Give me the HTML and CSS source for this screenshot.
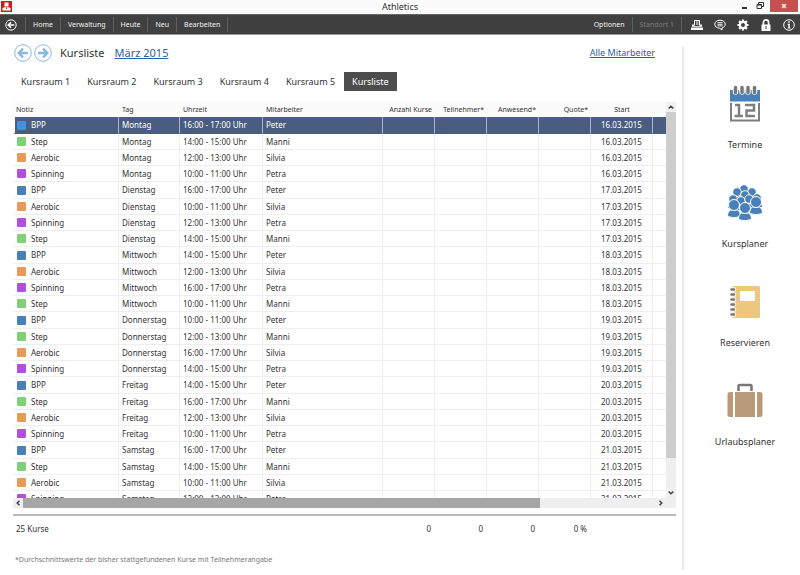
FILE: index.html
```
<!DOCTYPE html>
<html lang="de">
<head>
<meta charset="utf-8">
<title>Athletics</title>
<link rel="stylesheet" href="styles.css">
</head>
<body>
<header class="titlebar">
  <svg class="app-icon" viewBox="0 0 11 11" aria-hidden="true"><path fill="#c8201a" d="M0 0h11v11H0z"/><path fill="#fff" d="M3.500 1.500h4v4h-4zM1.500 9.500V7l2-.8h4l2 .8v2.500z"/><path fill="#c8201a" d="M5 6.500h1V8H5z"/></svg>
  <h1 class="app-name">Athletics</h1>
  <div class="window-buttons">
    <button class="win" aria-label="Minimieren"><svg width="8" height="8" viewBox="0 0 8 8"><path fill="#333" d="M2 5h5v2H2z"/></svg></button>
    <button class="win" aria-label="Verkleinern"><svg width="8" height="8" viewBox="0 0 8 8"><path fill="none" stroke="#333" d="M1 2.500h4.500v4H1zM2.500 2.500v-2h5v4h-2M1 3h4.500"/></svg></button>
    <button class="win close" aria-label="Schließen"><svg width="6" height="6" viewBox="0 0 6 6"><path stroke="#fff" stroke-width="1.300" d="M1 1l4 4M5 1L1 5"/></svg></button>
  </div>
</header>
<nav class="toolbar">
  <button class="tool back" aria-label="Zurück"><svg width="12" height="12" viewBox="0 0 12 12"><circle cx="6" cy="6" r="5.200" fill="none" stroke="#fff"/><path fill="none" stroke="#fff" stroke-width="1.600" d="M9.300 6H3.500M6 3.200L3.200 6 6 8.800"/></svg></button>
  <button class="tool">Home</button>
  <button class="tool">Verwaltung</button>
  <button class="tool">Heute</button>
  <button class="tool">Neu</button>
  <button class="tool">Bearbeiten</button>
  <span class="spring"></span>
  <button class="tool options">Optionen</button>
  <button class="tool" disabled>Standort 1</button>
  <div class="tool-icons">
    <button aria-label="Drucken"><svg width="12" height="12" viewBox="0 0 12 12"><path fill="#fff" d="M0 8.500h12V11H0zM1 5.500h2V7h6V5.500h2v2.300H1z"/><path fill="none" stroke="#fff" d="M3.500 6.500v-5h5v5M5 3h2.500M5 5h2.500"/></svg></button>
    <button aria-label="Nachrichten"><svg width="12" height="12" viewBox="0 0 12 12"><path fill="none" stroke="#fff" d="M6 1.200c3 0 5.200 1.700 5.200 4 0 2-1.500 3.300-3.300 3.800L8 11 5.500 9.200C2.800 9 .8 7.500.8 5.200c0-2.300 2.200-4 5.200-4z"/><path stroke="#fff" d="M3.500 3.700h5M3.500 5.300h5M3.500 6.900h5" stroke-width=".9"/></svg></button>
    <button aria-label="Einstellungen"><svg width="12" height="12" viewBox="0 0 12 12"><circle cx="6" cy="6" r="3.100" fill="none" stroke="#fff" stroke-width="2.200"/><path stroke="#fff" stroke-width="2.200" d="M6 .5v2M6 9.500v2M.5 6h2M9.500 6h2M2.100 2.100l1.400 1.400M8.500 8.500l1.400 1.400M9.900 2.100L8.500 3.500M3.500 8.500L2.100 9.900"/></svg></button>
    <button aria-label="Sperren"><svg width="12" height="12" viewBox="0 0 12 12"><path fill="#fff" d="M1.500 5.500h9V12h-9z"/><path fill="none" stroke="#fff" stroke-width="1.700" d="M3.400 6V3.500a2.600 2.600 0 0 1 5.200 0V6"/><path fill="#404040" d="M5.500 7h1v3h-1z"/></svg></button>
    <button aria-label="Info"><svg width="12" height="12" viewBox="0 0 12 12"><circle cx="6" cy="6" r="5.300" fill="none" stroke="#fff"/><path fill="#fff" d="M5.200 2.300h1.600v1.500H5.200zM4.500 4.800h2.300v3.900h.9v.9H4.500v-.9h.8V5.700h-.8z"/></svg></button>
  </div>
</nav>
<div class="workspace">
  <main class="content">
    <div class="heading">
      <button class="round" aria-label="Voriger Monat"><svg width="18" height="18" viewBox="0 0 18 18"><circle cx="9" cy="9" r="8.300" fill="#fff" stroke="#8cb8de"/><path fill="none" stroke="#8cb8de" stroke-width="2.500" d="M14 9H5.500M9 4.700L4.800 9 9 13.300"/></svg></button>
      <button class="round" aria-label="Nächster Monat"><svg width="18" height="18" viewBox="0 0 18 18"><circle cx="9" cy="9" r="8.300" fill="#fff" stroke="#8cb8de"/><path fill="none" stroke="#8cb8de" stroke-width="2.500" d="M4 9h8.500M9 4.700L13.200 9 9 13.300"/></svg></button>
      <h2>Kursliste</h2>
      <a href="#monat" class="month">März 2015</a>
      <a href="#mitarbeiter" class="staff">Alle Mitarbeiter</a>
    </div>
    <div class="tabs">
      <button>Kursraum 1</button><button>Kursraum 2</button><button>Kursraum 3</button><button>Kursraum 4</button><button>Kursraum 5</button><button class="active">Kursliste</button>
    </div>
    <div class="grid-frame">
      <div class="pane">
        <table class="courses">
          <colgroup><col class="c-note"><col class="c-day"><col class="c-time"><col class="c-staff"><col class="c-num"><col class="c-num"><col class="c-num"><col class="c-num"><col class="c-start"><col class="c-rest"></colgroup>
          <thead><tr><th>Notiz</th><th>Tag</th><th>Uhrzeit</th><th>Mitarbeiter</th><th class="num">Anzahl Kurse</th><th class="num">Teilnehmer*</th><th class="num">Anwesend*</th><th class="num">Quote*</th><th class="mid">Start</th><th></th></tr></thead>
          <tbody id="rows"></tbody>
        </table>
      </div>
      <div class="vbar"><button aria-label="Nach oben"><svg width="6" height="4" viewBox="0 0 6 4"><path d="M.7 3.500L3 1.200l2.300 2.300"/></svg></button><div class="track"><div class="thumb"></div></div><button aria-label="Nach unten"><svg width="6" height="4" viewBox="0 0 6 4"><path d="M.7.5L3 2.800 5.300.5"/></svg></button></div>
      <div class="hbar"><button aria-label="Nach links"><svg width="4" height="6" viewBox="0 0 4 6"><path d="M3.500.7L1.200 3l2.300 2.300"/></svg></button><div class="track"><div class="thumb"></div></div><button aria-label="Nach rechts"><svg width="4" height="6" viewBox="0 0 4 6"><path d="M.5.7L2.800 3 .5 5.300"/></svg></button></div>
    </div>
    <div class="summary"><span class="count">25 Kurse</span><span>0</span><span>0</span><span>0</span><span>0 %</span></div>
    <p class="footnote">*Durchschnittswerte der bisher stattgefundenen Kurse mit Teilnehmerangabe</p>
  </main>
  <aside class="sidebar">
    <a href="#termine"><svg width="38" height="38" viewBox="0 0 38 38"><path fill="#4880b8" d="M4 5h30v11.500H4z"/><path fill="none" stroke="#7f7f7f" stroke-width="2" d="M5 18v17.500h28V18"/><g stroke="#fff" stroke-width="5.500" stroke-linecap="round"><path d="M9.500 3v4M16 3v4M22 3v4M28.500 3v4"/></g><g stroke="#777" stroke-width="3.500" stroke-linecap="round"><path d="M9.500 2.500v5M16 2.500v5M22 2.500v5M28.500 2.500v5"/></g><path fill="none" stroke="#7f7f7f" stroke-width="2.500" d="M9 20h4v11M8.500 31h8.500M19 20h9v5.500h-7.500V31H29"/></svg>Termine</a>
    <a href="#kursplaner"><svg width="38" height="38" viewBox="0 0 38 38"><defs><g id="person"><path d="M-6.500 11.500c0-3.500 1-5.500 3-6.500h7c2 1 3 3 3 6.500q-6.500 2.500-13 0z"/><circle r="5.500"/></g><g id="person-far"><path d="M-5.500 9.500c0-3 1-4.500 2.500-5.500h6c1.500 1 2.500 2.500 2.500 5.500z"/><circle r="4.300"/></g></defs><g fill="#4880b8" stroke="#fff"><use href="#person-far" x="18" y="5"/><use href="#person-far" x="11" y="8"/><use href="#person-far" x="26" y="8"/><use href="#person-far" x="7" y="15"/><use href="#person-far" x="31" y="14"/><use href="#person-far" x="19" y="11"/><use href="#person-far" x="15" y="17"/><use href="#person-far" x="23" y="15"/><use href="#person" x="30" y="18"/><use href="#person" x="8" y="21"/><use href="#person" x="19" y="24"/></g></svg>Kursplaner</a>
    <a href="#reservieren"><svg width="38" height="38" viewBox="0 0 38 38"><rect x="6" y="3" width="28" height="32" rx="1.500" fill="#ecc77e"/><path fill="#fff" d="M14 8h15v10H14z"/><g stroke="#fff" stroke-width="4.500" stroke-linecap="round"><path d="M4 6.500h4M4 11.500h4M4 16.500h4M4 21.500h4M4 26.500h4M4 31.500h4"/></g><g stroke="#777" stroke-width="2.600" stroke-linecap="round"><path d="M5.500 6.500h2.500M5.500 11.500h2.500M5.500 16.500h2.500M5.500 21.500h2.500M5.500 26.500h2.500M5.500 31.500h2.500"/></g></svg>Reservieren</a>
    <a href="#urlaubsplaner"><svg width="38" height="38" viewBox="0 0 38 38"><path fill="none" stroke="#777" stroke-width="2.500" d="M12.500 9V4q0-1 1-1h11q1 0 1 1v5"/><path fill="#b89a7b" d="M9 10h20v25H9zM4 10h3v25H4q-2.500 0-2.500-2.500v-20Q1.500 10 4 10zM31 10h3q2.500 0 2.500 2.500v20q0 2.500-2.500 2.500h-3z"/></svg>Urlaubsplaner</a>
  </aside>
</div>
<script src="app.js"></script>
</body>
</html>
```
FILE: styles.css
```
* { box-sizing: border-box; }
body {
  margin: 0;
  height: 100vh;
  display: flex;
  flex-direction: column;
  overflow: hidden;
  background: #fff;
  color: #333;
  font: 8px/12px "Noto Sans", "Open Sans", sans-serif;
}
button {
  border: 0;
  padding: 0;
  background: none;
  color: inherit;
  font: inherit;
}
svg { display: block; flex: none; }
a { color: #2a62a8; }

.titlebar {
  display: grid;
  grid-template-columns: 1fr auto 1fr;
  height: 14px;
  flex: none;
  background: #fbfbfb;
}
.app-icon { width: 11px; height: 11px; margin: 1px; }
.app-name { margin: 0; font-size: 9px; font-weight: 400; line-height: 14px; }
.window-buttons { display: flex; justify-content: flex-end; }
.win {
  width: 16px;
  height: 12px;
  display: flex;
  align-items: center;
  justify-content: center;
}
.win.close { width: 28px; margin: 0 2px; background: #c75050; }

.toolbar {
  display: flex;
  align-items: center;
  height: 21px;
  flex: none;
  background: #404040;
  border-bottom: 1px solid #999;
  border-top: 1px solid #666;
  color: #f2f2f2;
}
.tool {
  height: 15px;
  padding: 0 7px;
  border-right: 1px solid #606060;
  font-size: 7px;
}
.tool.back { padding: 0 8px 0 5px; }
.tool:disabled { color: #7c7c7c; }
.spring { flex: 1; }
.tool-icons { display: flex; gap: 11px; padding: 0 5px 0 9px; }

.workspace { flex: 1; display: flex; min-height: 0; }
.content {
  flex: 1;
  min-width: 0;
  display: flex;
  flex-direction: column;
  padding: 8px 6px 9px 13px;
}
.heading { display: flex; align-items: center; height: 20px; }
.round { margin: 0 1px; }
.heading h2 { margin: 0 10px 0 7px; font-size: 11px; font-weight: 400; }
.month { font-size: 11px; }
.staff { margin-left: auto; margin-right: 21px; font-size: 9px; }

.tabs { display: flex; gap: 1px; margin-top: 9px; }
.tabs button { height: 19px; padding: 0 8px; font-size: 9px; }
.tabs .active { background: #4d4d4d; color: #fff; }

.grid-frame {
  flex: 1;
  min-height: 0;
  margin-top: 11px;
  display: grid;
  grid-template: minmax(0, 1fr) 10px / minmax(0, 1fr) 10px;
}
.pane { overflow: hidden; }
.courses { width: 100%; table-layout: fixed; border-collapse: separate; border-spacing: 0; }
.c-note { width: 106px; }
.c-day { width: 61px; }
.c-time { width: 83px; }
.c-num { width: 52px; }
.c-start { width: 62px; }
.c-rest { width: 13px; }
th {
  height: 15px;
  padding: 0 3px;
  background: #fbfbfb;
  font-size: 7px;
  font-weight: 400;
  line-height: 12px;
  text-align: left;
  white-space: nowrap;
}
td {
  height: 16px;
  padding: 0 3px;
  border-right: 1px solid #eee;
  border-bottom: 1px solid #eee;
  line-height: 12px;
  white-space: nowrap;
}
tr:nth-child(4n+1) td { height: 17px; }
th.num { text-align: right; }
.mid { text-align: center; }
td:first-child { padding-left: 4px; }
td:last-child { border-right: 0; }
.selected td { background: #4a5d80; border-color: #a9b4c8; border-bottom-color: #4a5d80; color: #fff; }
.selected td:first-child { padding-left: 2px; border-left: 2px solid #fff; }
.note { display: flex; align-items: center; gap: 5px; }
.swatch { width: 9px; height: 9px; border-radius: 1px; }
.bpp { background: #4880b8; }
.selected .bpp { background: #4490e0; }
.step { background: #80d078; }
.aerobic { background: #e89a58; }
.spinning { background: #b24fdc; }

.vbar, .hbar { display: flex; background: #efefef; }
.vbar { flex-direction: column; }
.hbar { grid-column: 1 / -1; }
.vbar button, .hbar button { width: 10px; height: 10px; display: flex; align-items: center; justify-content: center; }
.vbar path, .hbar path { fill: none; stroke: #444; stroke-width: 1.5; }
.track { flex: 1; display: flex; }
.vbar .thumb { width: 100%; height: 92%; background: #cdcdcd; }
.hbar .thumb { width: 83%; background: #a6a6a6; }
.hbar button:last-child { width: 30px; }

.summary {
  display: flex;
  margin-top: 6px;
  padding: 7px 89px 0 3px;
  border-top: 2px solid #b9b9b9;
}
.summary span { width: 52px; text-align: right; }
.summary .count { width: auto; margin-right: auto; }
.footnote { margin: 19px 2px 0; color: #777; font-size: 7px; }

.sidebar {
  width: 118px;
  margin: 12px 0 5px;
  padding: 38px 0 0 6px;
  border-left: 2px solid #e9e9e9;
}
.sidebar a {
  display: flex;
  flex-direction: column;
  align-items: center;
  gap: 16px;
  height: 99px;
  color: #333;
  font-size: 9px;
  text-decoration: none;
}
```
FILE: app.js
```
const courses = [
  ["BPP", "Montag", 16, "Peter", 16], ["Step", "Montag", 14, "Manni", 16],
  ["Aerobic", "Montag", 12, "Silvia", 16], ["Spinning", "Montag", 10, "Petra", 16],
  ["BPP", "Dienstag", 16, "Peter", 17], ["Aerobic", "Dienstag", 10, "Silvia", 17],
  ["Spinning", "Dienstag", 12, "Petra", 17], ["Step", "Dienstag", 14, "Manni", 17],
  ["BPP", "Mittwoch", 14, "Peter", 18], ["Aerobic", "Mittwoch", 12, "Silvia", 18],
  ["Spinning", "Mittwoch", 16, "Petra", 18], ["Step", "Mittwoch", 10, "Manni", 18],
  ["BPP", "Donnerstag", 10, "Peter", 19], ["Step", "Donnerstag", 12, "Manni", 19],
  ["Aerobic", "Donnerstag", 16, "Silvia", 19], ["Spinning", "Donnerstag", 14, "Petra", 19],
  ["BPP", "Freitag", 14, "Peter", 20], ["Step", "Freitag", 16, "Manni", 20],
  ["Aerobic", "Freitag", 12, "Silvia", 20], ["Spinning", "Freitag", 10, "Petra", 20],
  ["BPP", "Samstag", 16, "Peter", 21], ["Step", "Samstag", 14, "Manni", 21],
  ["Aerobic", "Samstag", 10, "Silvia", 21], ["Spinning", "Samstag", 12, "Petra", 21]
];
document.getElementById("rows").innerHTML = courses.map(([name, day, hour, staff, date], i) =>
  `<tr${i === 0 ? ' class="selected"' : ""}><td><div class="note"><span class="swatch ${name.toLowerCase()}"></span>${name}</div></td>` +
  `<td>${day}</td><td>${hour}:00 - ${hour + 1}:00 Uhr</td><td>${staff}</td><td></td><td></td><td></td><td></td>` +
  `<td class="mid">${date}.03.2015</td><td></td></tr>`).join("");
```
